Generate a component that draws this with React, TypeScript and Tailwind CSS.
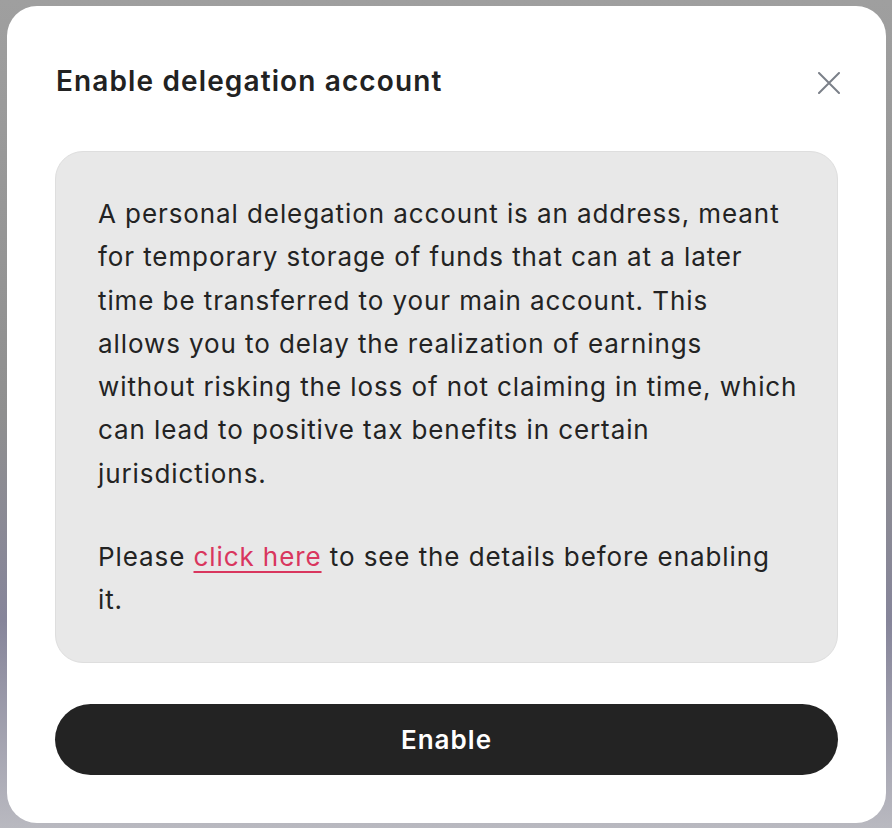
export default function App() {
  return (
    <div className="flex h-[828px] w-full items-start justify-start bg-[linear-gradient(180deg,#9f9f9f_0%,#8f8f8f_50%,#86859a_75%,#b9b9c0_100%)] pl-[7px] pt-[6px] font-['Inter','Liberation_Sans',sans-serif]">
      <div className="flex h-[817px] w-[879px] flex-col rounded-[30px] bg-white px-[48px] pb-[48px] pt-[57px]">
        <div className="flex items-start justify-between">
          <h1 className="pl-px text-[28px] font-semibold leading-[36px] tracking-[0.04em] text-[#222222]">
            Enable delegation account
          </h1>
          <button className="mr-[-2px] mt-[9px] flex h-[22px] w-[22px] items-center justify-center text-[#7b8089]">
            <svg width="22" height="22" viewBox="0 0 22 22" fill="none">
              <path d="M1 1L21 21M21 1L1 21" stroke="currentColor" strokeWidth="2" strokeLinecap="round" />
            </svg>
          </button>
        </div>

        <div className="mt-[52px] rounded-[28px] border border-[#dedede] bg-[#e8e8e8] py-[40px] pl-[42px] pr-[20px] text-[26px] leading-[43.3px] tracking-[0.035em] text-[#232323]">
          <p className="whitespace-nowrap">
            A personal delegation account is an address, meant
            <br />
            for temporary storage of funds that can at a later
            <br />
            time be transferred to your main account. This
            <br />
            allows you to delay the realization of earnings
            <br />
            without risking the loss of not claiming in time, which
            <br />
            can lead to positive tax benefits in certain
            <br />
            jurisdictions.
          </p>
          <p className="mt-[40px] whitespace-nowrap">
            Please{" "}
            <a href="#" className="text-[#d9365e] underline decoration-[2px] underline-offset-[5px]">
              click here
            </a>{" "}
            to see the details before enabling
            <br />
            it.
          </p>
        </div>

        <button className="mt-[41px] flex h-[71px] w-full items-center justify-center rounded-full bg-[#232323] text-[26px] font-semibold tracking-[0.04em] text-white">
          Enable
        </button>
      </div>
    </div>
  );
}
